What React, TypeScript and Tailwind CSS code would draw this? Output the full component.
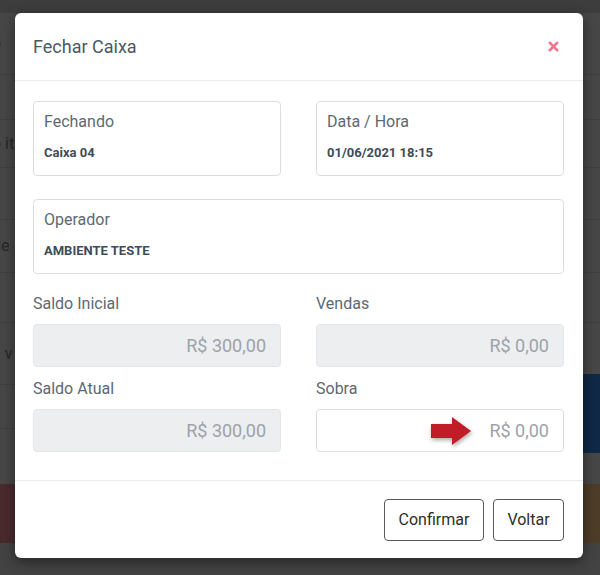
import { X } from 'lucide-react';

const font = { fontFamily: 'Roboto, "Liberation Sans", sans-serif' };

function InfoCard({ label, value }: { label: string; value: string }) {
  return (
    <div className="h-[75px] rounded border border-[#dcdfe2] px-[10px] pt-[10px]">
      <div className="text-[16px] leading-[20px] text-[#5d6972]">{label}</div>
      <div className="mt-[13px] text-[13px] font-bold leading-[16px] text-[#3f4c57]">{value}</div>
    </div>
  );
}

function MoneyField({
  label,
  value,
  disabled = true,
  arrow = false,
}: {
  label: string;
  value: string;
  disabled?: boolean;
  arrow?: boolean;
}) {
  return (
    <div>
      <div className="h-[21px] text-[16px] leading-[20px] text-[#5d6972]">{label}</div>
      <div
        className={`mt-[9px] flex h-[43px] items-center justify-end gap-[17px] rounded border pr-[14px] text-[18px] text-[#9da3a9] ${
          disabled ? 'border-[#e3e6e9] bg-[#eceef0]' : 'border-[#dcdfe2] bg-white'
        }`}
      >
        {arrow && (
          <svg width="42" height="30" viewBox="0 0 42 30" className="drop-shadow-[1px_2px_2px_rgba(0,0,0,0.35)]">
            <path d="M1 8 H22 V1 L41 15 L22 29 V22 H1 Z" fill="#c01d28" />
          </svg>
        )}
        <span>{value}</span>
      </div>
    </div>
  );
}

function BackgroundRow({ text, h }: { text: string; h: string }) {
  return (
    <div className={`flex items-center border-b border-[#3f3f3f] ${h}`}>
      <span className="ml-[-8px] text-[16px] text-[#262626]">{text}</span>
    </div>
  );
}

export default function App() {
  return (
    <div className="relative h-[575px] w-[600px] overflow-hidden bg-[#474747]" style={font}>
      {/* dimmed page behind */}
      <div className="flex h-full flex-col">
        <div className="h-[13px] bg-[#3d3d3d]" />
        <BackgroundRow text="o" h="h-[62px]" />
        <BackgroundRow text="" h="h-[45px]" />
        <BackgroundRow text="o it" h="h-[48px]" />
        <BackgroundRow text="" h="h-[52px]" />
        <BackgroundRow text="de" h="h-[53px]" />
        <BackgroundRow text="" h="h-[50px]" />
        <BackgroundRow text="a v" h="h-[62px]" />
        <BackgroundRow text="" h="h-[44px]" />
        <div className="h-[55px]" />
        <div className="flex h-[59px]">
          <div className="w-[40px] bg-[#4a2a2f]" />
          <div className="flex-1" />
          <div className="w-[40px] bg-[#4d3c28]" />
        </div>
        <div className="flex-1 bg-[#434343]" />
      </div>
      <div className="absolute right-0 top-[374px] h-[79px] w-[20px] bg-[#0f2845]" />

      {/* modal */}
      <div className="absolute left-[15px] top-[13px] flex h-[545px] w-[568px] flex-col rounded-[6px] bg-white shadow-[0_4px_14px_rgba(0,0,0,0.45)]">
        <div className="flex h-[68px] items-center justify-between border-b border-[#e9ecef] pl-[18px] pr-[22px]">
          <h2 className="text-[18px] font-normal text-[#4a5964]">Fechar Caixa</h2>
          <X className="h-[15px] w-[15px] text-[#f6738d]" strokeWidth={4} />
        </div>

        <div className="flex flex-col pl-[18px] pr-[19px] pt-[20px]">
          <div className="grid grid-cols-2 gap-x-[35px]">
            <InfoCard label="Fechando" value="Caixa 04" />
            <InfoCard label="Data / Hora" value="01/06/2021 18:15" />
          </div>
          <div className="mt-[23px]">
            <InfoCard label="Operador" value="AMBIENTE TESTE" />
          </div>
          <div className="mt-[20px] grid grid-cols-2 gap-x-[35px] gap-y-[12px]">
            <MoneyField label="Saldo Inicial" value="R$ 300,00" />
            <MoneyField label="Vendas" value="R$ 0,00" />
            <MoneyField label="Saldo Atual" value="R$ 300,00" />
            <MoneyField label="Sobra" value="R$ 0,00" disabled={false} arrow />
          </div>
        </div>

        <div className="mt-[28px] flex flex-1 items-start justify-end gap-[9px] border-t border-[#e9ecef] pr-[19px] pt-[18px]">
          <button className="h-[42px] w-[100px] rounded border border-[#5a5a5a] text-[16px] text-[#2e2e2e]">
            Confirmar
          </button>
          <button className="h-[42px] w-[71px] rounded border border-[#5a5a5a] text-[16px] text-[#2e2e2e]">
            Voltar
          </button>
        </div>
      </div>
    </div>
  );
}
